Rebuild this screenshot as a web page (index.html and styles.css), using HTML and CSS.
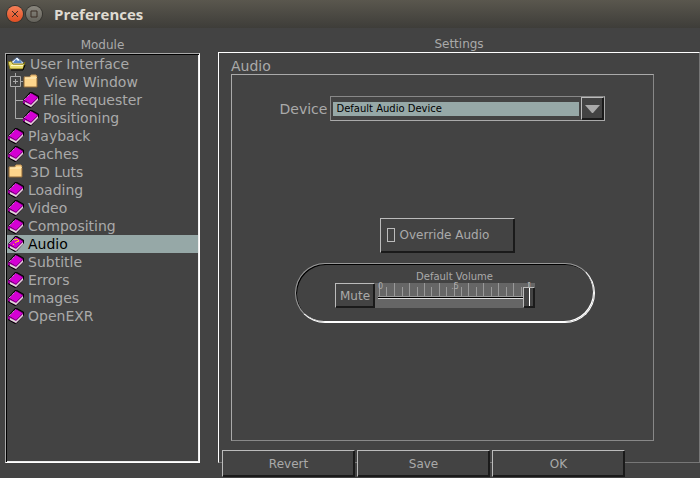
FILE: index.html
```html
<!DOCTYPE html>
<html lang="en">
<head>
<meta charset="utf-8">
<title>Preferences</title>
<link rel="stylesheet" href="styles.css">
</head>
<body>
<svg class="defs" aria-hidden="true">
  <symbol id="book" viewBox="0 0 16 16">
    <path d="M0 8L7 0H9L16 4V7L9 15L7 16L0 12Z" fill="#000"/>
    <path d="M0 8L8 12L15 5V8L8 15L0 11Z" fill="#a000a0"/>
    <path d="M2 10L8 13L15 6V8L8 15L2 12Z" fill="#dcdcd4"/>
    <path d="M1 8L8 1L15 5L8 12Z" fill="#d400d4"/>
    <path d="M1 8L8 1" stroke="#f8b8f8" stroke-dasharray="1 1" fill="none"/>
    <path d="M8 1L15 5" stroke="#500050" stroke-dasharray="1 1" fill="none"/>
  </symbol>
  <symbol id="folder" viewBox="0 0 16 16">
    <path d="M1 3H7L8 1H13L14 3V13H1Z" fill="#fdd58c"/>
    <path d="M1 3H7L8 1H13L14 3" stroke="#c89858" fill="none"/>
    <path d="M2 4H13" stroke="#fff0c4"/>
    <path d="M1 3V13H14V4" stroke="#906838" fill="none"/>
  </symbol>
  <symbol id="open-folder" viewBox="0 0 18 16">
    <path d="M2 7L9 1L16 7V10H2Z" fill="#f0f8ff" stroke="#4a5a78"/>
    <path d="M5 7L8 3L10 5L12 4L14 7Z" fill="#5888c8"/>
    <path d="M0 6L3 5L5 8H15L17 6L15 13H2Z" fill="#e8dc70" stroke="#786c10"/>
    <path d="M3 9H15V10H3Z" fill="#fffac8"/>
    <path d="M3 14H15L17 9" stroke="#000" fill="none"/>
  </symbol>
</svg>
<header class="titlebar">
  <button class="dot close" aria-label="Close"><svg viewBox="0 0 16 16"><path d="M5 5L11 11M11 5L5 11"/></svg></button>
  <button class="dot" aria-label="Maximize"><svg viewBox="0 0 16 16"><path d="M5 5H11V11H5Z"/></svg></button>
  <h1>Preferences</h1>
</header>
<main class="window">
  <section class="module">
    <h2>Module</h2>
    <ul class="tree">
      <li class="wide"><svg class="open"><use href="#open-folder"/></svg>User Interface</li>
      <li class="child wide"><svg class="branch" viewBox="0 0 16 18"><path d="M7.500 0V4M7.500 13V18M12 8.500H15"/><path d="M2.500 3.500H12.500V13.500H2.500Z"/><path d="M5 8.500H10M7.500 6V11"/></svg><svg><use href="#folder"/></svg>View Window</li>
      <li class="child"><svg class="branch" viewBox="0 0 16 18"><path d="M7.500 0V18M7.500 9.500H15"/></svg><svg><use href="#book"/></svg>File Requester</li>
      <li class="child"><svg class="branch" viewBox="0 0 16 18"><path d="M7.500 0V9.500H15"/></svg><svg><use href="#book"/></svg>Positioning</li>
      <li><svg><use href="#book"/></svg>Playback</li>
      <li><svg><use href="#book"/></svg>Caches</li>
      <li class="wide"><svg><use href="#folder"/></svg>3D Luts</li>
      <li><svg><use href="#book"/></svg>Loading</li>
      <li><svg><use href="#book"/></svg>Video</li>
      <li><svg><use href="#book"/></svg>Compositing</li>
      <li class="selected"><svg viewBox="0 0 16 16"><use href="#book"/><path class="mark" d="M6 4L9 3L11 5L8 6L7 7M6 8L5 9"/></svg>Audio</li>
      <li><svg><use href="#book"/></svg>Subtitle</li>
      <li><svg><use href="#book"/></svg>Errors</li>
      <li><svg><use href="#book"/></svg>Images</li>
      <li><svg><use href="#book"/></svg>OpenEXR</li>
    </ul>
  </section>
  <section class="settings">
    <h2>Settings</h2>
    <div class="panel">
      <h3>Audio</h3>
      <div class="group">
        <div class="device">
          <label for="device">Device</label>
          <div class="combo">
            <select id="device"><option>Default Audio Device</option></select>
            <span class="arrow"><svg viewBox="0 0 15 8"><path d="M0 0H15L8 8H7Z"/></svg></span>
          </div>
        </div>
        <label class="override raised"><input type="checkbox">Override Audio</label>
        <div class="volume">
          <label for="volume">Default Volume</label>
          <div class="mixer">
            <button class="mute raised">Mute</button>
            <div class="slider">
              <svg class="scale" viewBox="0 0 160 25" preserveAspectRatio="none">
                <path d="M4.500 0V13M19.500 0V13M34.500 0V13M49.500 0V13M64.500 0V13M79.500 0V13M93.500 0V13M108.500 0V13M123.500 0V13M138.500 0V13M153.500 0V13M11.500 4V13M27.500 4V13M42.500 4V13M56.500 4V13M71.500 4V13M86.500 4V13M101.500 4V13M116.500 4V13M131.500 4V13M146.500 4V13"/>
              </svg>
              <div class="marks"><span>0</span><span>.5</span><span>1</span></div>
              <input id="volume" type="range" min="0" max="1" step="0.01" value="1">
            </div>
          </div>
        </div>
      </div>
    </div>
    <div class="actions">
      <button class="raised">Revert</button>
      <button class="raised">Save</button>
      <button class="raised">OK</button>
    </div>
  </section>
</main>
</body>
</html>
```
FILE: styles.css
```css
* { box-sizing: border-box; }

body {
  margin: 0;
  min-height: 100vh;
  display: flex;
  flex-direction: column;
  background: #434343;
  color: #aaa;
  font: 12px/16px "DejaVu Sans", sans-serif;
}

h1, h2, h3, ul { margin: 0; padding: 0; font-weight: normal; }
button, select, input { font: inherit; color: inherit; margin: 0; }
.defs { position: absolute; width: 0; height: 0; }

.titlebar {
  height: 28px;
  display: flex;
  align-items: center;
  gap: 3px;
  padding: 0 7px;
  background: linear-gradient(#5a574e, #3e3d39);
}
.titlebar h1 {
  margin-left: 9px;
  color: #dfdbd2;
  font: bold 15px/20px "Open Sans", sans-serif;
}
.dot {
  width: 16px;
  height: 16px;
  padding: 0;
  border: 0;
  border-radius: 50%;
  background: linear-gradient(#8a877e, #65635c);
  box-shadow: 0 0 0 1px #35342f;
}
.dot.close { background: linear-gradient(#f58058, #e14e22); }
.dot svg { display: block; fill: none; stroke: #3a2c24; }

.window {
  flex: 1;
  display: flex;
  gap: 18px;
  padding: 9px 0 0 5px;
}
h2 { font-size: 12px; line-height: 16px; text-align: center; }

.module { width: 195px; display: flex; flex-direction: column; padding-bottom: 15px; }
.tree {
  flex: 1;
  list-style: none;
  border: 1px solid;
  border-color: #aaa #fff #fff #aaa;
  box-shadow: inset 1px 1px #000, inset -1px -1px #eee;
  padding: 1px;
  font-size: 14px;
  line-height: 18px;
}
.tree li { display: flex; align-items: center; gap: 4px; height: 18px; padding-left: 1px; }
.tree li.wide { gap: 6px; }
.tree svg { width: 16px; height: 16px; flex: none; }
.tree svg.open { width: 18px; margin-right: -2px; }
.tree .branch { width: 16px; height: 18px; fill: none; stroke: #aaa; margin-right: -5px; }
.tree .wide .branch { margin-right: -7px; }
.tree .selected { background: #96a8a7; color: #000; }
.mark { fill: none; stroke: #ffe000; }

.settings { flex: 1; min-width: 0; display: flex; flex-direction: column; }
.settings h2 { line-height: 15px; }
.panel {
  flex: 1;
  display: flex;
  flex-direction: column;
  border: 1px solid;
  border-color: #fff #777 #777 #fff;
  padding: 5px 45px 21px 12px;
}
.panel h3 { font-size: 14px; line-height: 16px; }
.group {
  flex: 1;
  display: flex;
  flex-direction: column;
  align-items: center;
  border: 1px solid;
  border-color: #aaa #888 #888 #aaa;
  padding-top: 21px;
}
.device { display: flex; align-items: center; gap: 3px; font-size: 14px; }
.combo {
  width: 275px;
  height: 25px;
  display: flex;
  align-items: center;
  gap: 2px;
  border: 1px solid;
  border-color: #888 #aaa #aaa #888;
  padding-left: 2px;
}
.combo select {
  flex: 1;
  height: 14px;
  appearance: none;
  border: 0;
  border-radius: 0;
  padding: 0 3px;
  background: #96a8a7;
  color: #000;
  font-size: 10px;
  line-height: 14px;
}
.raised, .arrow {
  background: #434343;
  border: 1px solid;
  border-color: #bbb #1a1a1a #1a1a1a #bbb;
  box-shadow: inset -1px -1px #1a1a1a;
  border-radius: 0;
}
.arrow { width: 23px; height: 23px; display: grid; place-items: center; }
.arrow svg { width: 15px; height: 8px; fill: #aaa; }

.override {
  width: 135px;
  height: 35px;
  display: flex;
  align-items: center;
  gap: 5px;
  margin: 97px 0 10px 9px;
  padding: 0 6px 2px;
}
.override input { appearance: none; width: 8px; height: 14px; border: 1px solid #bbb; }

.volume {
  width: 300px;
  height: 60px;
  margin-left: 5px;
  display: flex;
  flex-direction: column;
  align-items: center;
  border: 1px solid;
  border-color: #999 #fff #fff #999;
  border-radius: 30px;
  box-shadow: inset 1px 1px #000, inset -1px -1px #fff;
  padding: 7px 0 0 19px;
  font-size: 10px;
  line-height: 12px;
}
.mixer { width: 200px; display: flex; align-self: flex-start; margin-left: 20px; }
.mute { width: 40px; height: 25px; padding: 0; font-size: 12px; }
.slider { flex: 1; display: grid; height: 25px; background: #666; }
.slider > * { grid-area: 1 / 1; }
.scale { width: 100%; height: 25px; stroke: #999; }
.marks { display: flex; justify-content: space-between; padding: 0 3px; font-size: 8px; line-height: 8px; }
.slider input { appearance: none; width: 100%; height: 25px; background: none; padding-left: 3px; }
.slider input::-webkit-slider-runnable-track {
  height: 3px;
  margin-top: 4px;
  background: linear-gradient(#999 1px, #000 1px, #000 2px, #ddd 2px);
}
.slider input::-webkit-slider-thumb {
  appearance: none;
  width: 12px;
  height: 21px;
  margin-top: -9px;
  border: 1px solid;
  border-color: #bbb #1a1a1a #1a1a1a #bbb;
  box-shadow: inset -1px -1px #1a1a1a;
  background: linear-gradient(90deg, #434343 5px, #fff 5px, #fff 6px, #434343 6px);
}

.actions {
  display: grid;
  grid-template-columns: repeat(3, 1fr);
  gap: 2px;
  margin: -13px 75px 1px 4px;
}
.actions button { height: 27px; padding: 0; font-size: 12px; }
```
